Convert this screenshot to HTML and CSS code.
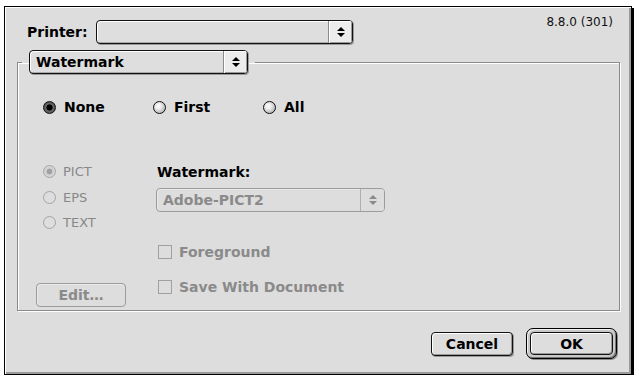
FILE: index.html
```html
<!DOCTYPE html>
<html>
<head>
<meta charset="utf-8">
<title>Watermark</title>
<link rel="stylesheet" href="styles.css">
</head>
<body>
<div class="window">
  <div class="top-row">
    <div class="printer">
      <span class="label">Printer:</span>
      <div class="popup popup-printer">
        <span class="popup-text"></span>
        <span class="popup-arrow"><i class="tri up"></i><i class="tri down"></i></span>
      </div>
    </div>
    <span class="version">8.8.0 (301)</span>
  </div>

  <fieldset class="group">
    <legend class="group-legend">
      <div class="popup popup-wm">
        <span class="popup-text">Watermark</span>
        <span class="popup-arrow"><i class="tri up"></i><i class="tri down"></i></span>
      </div>
    </legend>

    <div class="modes">
      <div class="radio-item"><span class="radio on"></span>None</div>
      <div class="radio-item"><span class="radio"></span>First</div>
      <div class="radio-item"><span class="radio"></span>All</div>
    </div>

    <div class="lower">
      <div class="left-col">
        <div class="types">
          <div class="type-item"><span class="radio dis on"></span>PICT</div>
          <div class="type-item"><span class="radio dis"></span>EPS</div>
          <div class="type-item"><span class="radio dis"></span>TEXT</div>
        </div>
        <div class="btn dis edit">Edit…</div>
      </div>
      <div class="right-col">
        <div class="wm-label">Watermark:</div>
        <div class="popup popup-adobe dis">
          <span class="popup-text">Adobe-PICT2</span>
          <span class="popup-arrow"><i class="tri up"></i><i class="tri down"></i></span>
        </div>
        <div class="check-item foreground"><span class="check"></span>Foreground</div>
        <div class="check-item save"><span class="check"></span>Save With Document</div>
      </div>
    </div>
  </fieldset>

  <div class="buttons">
    <div class="btn cancel">Cancel</div>
    <div class="default-ring"><div class="btn ok">OK</div></div>
  </div>
</div>
</body>
</html>
```

FILE: styles.css
```css
* { box-sizing: border-box; }
html, body { margin: 0; padding: 0; background: #fff; }
body {
  padding: 6px 0 0 4px;
  font-family: "DejaVu Sans", "Liberation Sans", sans-serif;
  color: #000;
}

.window {
  width: 628px;
  height: 369px;
  border: 1px solid #000;
  background: #dddddd;
  box-shadow: 2px 2px 0 #000, inset 1px 1px 0 #fff, inset -2px -2px 0 #9a9a9a;
  padding: 8px 11px 0 12px;
  display: flex;
  flex-direction: column;
}

/* top row */
.top-row {
  display: flex;
  justify-content: space-between;
  align-items: flex-start;
  height: 29px;
}
.printer {
  display: flex;
  align-items: center;
  margin: 5px 0 0 10px;
}
.label {
  width: 69px;
  font-weight: bold;
  font-size: 14px;
}
.version {
  font-size: 12px;
  line-height: 14px;
  margin-right: 7px;
  color: #111;
}

/* popups */
.popup {
  display: flex;
  height: 24px;
  border: 1px solid #111;
  border-radius: 4px;
  background: #dedede;
  box-shadow: 1px 1px 0 #999, inset 1px 1px 0 #fff, inset -1px -1px 0 #aaa;
  overflow: hidden;
}
.popup-printer { width: 257px; }
.popup-wm { width: 219px; }
.popup-adobe { width: 229px; margin-top: 3.5px; }
.popup-text {
  flex: 1;
  padding-left: 6px;
  font-weight: bold;
  font-size: 14px;
  display: flex;
  align-items: center;
}
.popup-arrow {
  width: 24px;
  border-left: 1px solid #8a8a8a;
  background: #ececec;
  box-shadow: inset 1px 1px 0 #fff, inset -1px -1px 0 #9a9a9a;
  display: flex;
  flex-direction: column;
  align-items: center;
  justify-content: center;
  gap: 2px;
}
.tri {
  width: 0;
  height: 0;
  border-left: 4px solid transparent;
  border-right: 4px solid transparent;
}
.tri.up { border-bottom: 4px solid #000; }
.tri.down { border-top: 4px solid #000; }

.popup.dis {
  border-color: #9c9c9c;
  box-shadow: inset 1px 1px 0 #eaeaea;
  background: #dddddd;
}
.popup.dis .popup-text { color: #8a8a8a; }
.popup.dis .popup-arrow {
  background: #dddddd;
  border-left-color: #b0b0b0;
  box-shadow: none;
}
.popup.dis .tri.up { border-bottom-color: #8a8a8a; }
.popup.dis .tri.down { border-top-color: #8a8a8a; }

/* group box */
.group {
  margin: 6px 0 0 0;
  padding: 0 0 3px 4px;
  height: 261px;
  min-width: 0;
  border: 1px solid #8a8a8a;
  box-shadow: inset 1px 1px 0 #fff, 1px 1px 0 #fff;
}
.group-legend {
  padding: 0 7px;
  margin: 0;
}

.modes {
  display: flex;
  align-items: center;
  height: 16px;
  margin: 25px 0 0 21px;
}
.radio-item {
  display: flex;
  align-items: center;
  width: 110px;
  font-weight: bold;
  font-size: 14px;
}
.radio {
  width: 13px;
  height: 13px;
  border-radius: 50%;
  border: 1px solid #111;
  margin-right: 8px;
  flex: none;
  background: radial-gradient(circle at 40% 38%, #fff 0, #f0f0f0 25%, #bdbdbd 70%, #8a8a8a 100%);
}
.radio.on {
  background: radial-gradient(circle, #000 0 2.8px, #6a6a6a 3.4px, #3a3a3a 100%);
}
.radio.dis {
  border-color: #a4a4a4;
  background: transparent;
}
.radio.dis.on {
  background: radial-gradient(circle, #a0a0a0 0 2.6px, #cfcfcf 3.2px, #dddddd 100%);
}

.lower {
  display: flex;
  height: 148px;
  margin: 44px 0 0 14px;
}
.left-col {
  width: 120px;
  display: flex;
  flex-direction: column;
}
.types { padding-left: 7px; }
.type-item {
  height: 25.5px;
  display: flex;
  align-items: center;
  font-size: 13px;
  color: #888;
}
.type-item .radio { margin-right: 7px; }

.right-col {
  display: flex;
  flex-direction: column;
}
.wm-label {
  height: 25.5px;
  display: flex;
  align-items: center;
  margin-left: 1px;
  font-weight: bold;
  font-size: 14px;
}
.check-item {
  height: 20px;
  display: flex;
  align-items: center;
  margin-left: 2px;
  font-weight: bold;
  font-size: 14px;
  color: #8a8a8a;
}
.check-item.foreground { margin-top: 30px; }
.check-item.save { margin-top: 15px; }
.check {
  width: 14px;
  height: 14px;
  border: 1px solid #a0a0a0;
  margin-right: 7px;
  flex: none;
}

/* buttons */
.btn {
  display: flex;
  align-items: center;
  justify-content: center;
  height: 24px;
  border: 1px solid #111;
  border-radius: 4px;
  background: #dddddd;
  box-shadow: inset 1px 1px 0 #fff, inset -1px -1px 0 #999, 1px 1px 0 #999;
  font-weight: bold;
  font-size: 14px;
}
.btn.dis {
  border-color: #9c9c9c;
  color: #8a8a8a;
  box-shadow: inset 1px 1px 0 #eaeaea;
}
.edit {
  width: 90px;
  margin-top: auto;
}

.buttons {
  display: flex;
  justify-content: flex-end;
  align-items: center;
  gap: 13px;
  margin: 17px 3px 0 0;
}
.cancel { width: 82px; }
.default-ring {
  width: 91px;
  height: 31px;
  padding: 3px;
  border: 1px solid #000;
  border-radius: 7px;
  background: #c8c8c8;
  box-shadow: inset 1px 1px 0 #f2f2f2, inset -1px -1px 0 #777, 1px 1px 0 #888;
}
.ok { height: 23px; width: 100%; box-shadow: inset 1px 1px 0 #fff, inset -1px -1px 0 #999; }
```
